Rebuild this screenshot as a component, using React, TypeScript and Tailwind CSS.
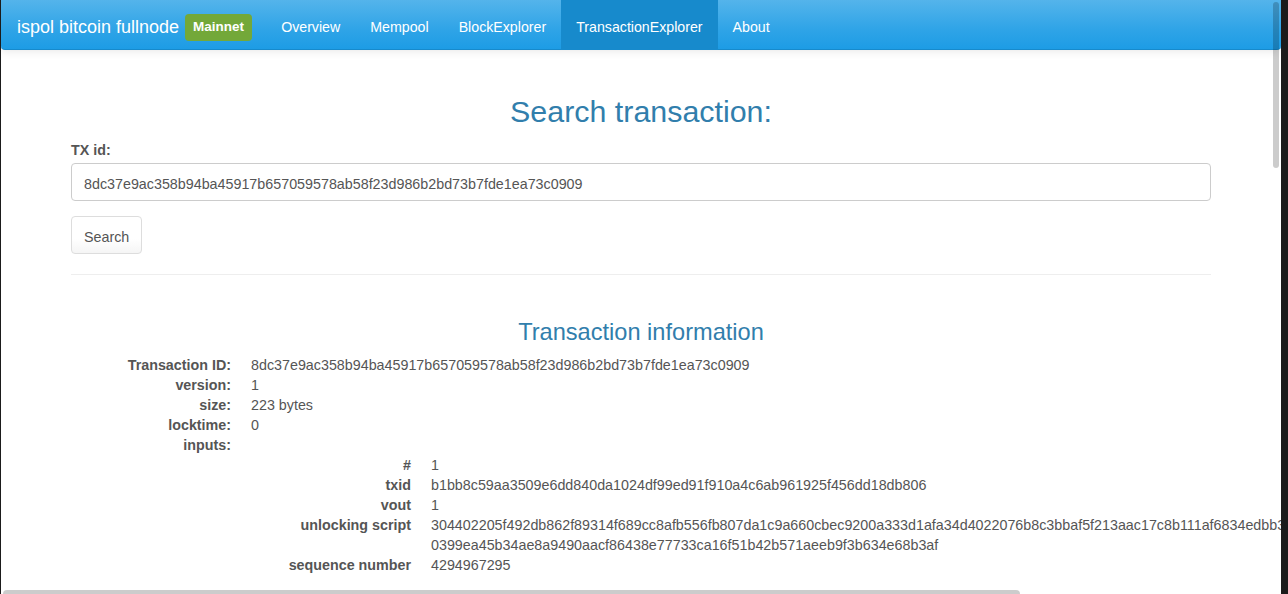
import React from "react";

const font = { fontFamily: '"Liberation Sans", Arial, sans-serif' };

function Row({ label, children, bold = true }: { label: string; children?: React.ReactNode; bold?: boolean }) {
  return (
    <div className="flex">
      <div className={`w-[160px] shrink-0 text-right whitespace-nowrap ${bold ? "font-bold" : ""}`}>{label}</div>
      <div className="ml-[20px] min-w-0 flex-1">{children}</div>
    </div>
  );
}

export default function App() {
  const navItems = ["Overview", "Mempool", "BlockExplorer", "TransactionExplorer", "About"];
  const sig =
    "304402205f492db862f89314f689cc8afb556fb807da1c9a660cbec9200a333d1afa34d4022076b8c3bbaf5f213aac17c8b111af6834edbb3c7e5a2d09f1e4b6a8c73d52e90101";
  const pub = "0399ea45b34ae8a9490aacf86438e77733ca16f51b42b571aeeb9f3b634e68b3af";
  return (
    <div className="w-[1288px] h-[594px] overflow-hidden flex bg-[#1b1b1b]" style={font}>
      <div className="w-[1px] shrink-0" />
      <div className="w-[1280px] shrink-0 h-full bg-white relative overflow-hidden text-[14.3px] leading-[20px] text-[#555555]">
        {/* navbar */}
        <div className="h-[50px] flex items-stretch rounded-b-[4px] border-b border-[#178acc] bg-[linear-gradient(#54b4eb,#2fa4e7_60%,#1d9ce5)] shadow-[0_1px_10px_rgba(0,0,0,0.1)] text-white">
          <div className="flex items-center pl-[16px] pt-[5px]">
            <span className="text-[18px] leading-[20px]">ispol bitcoin fullnode</span>
            <span className="ml-[6px] h-[27px] px-[8px] flex items-center rounded-[4px] bg-[#73a839] text-[13.5px] font-bold leading-none">
              Mainnet
            </span>
          </div>
          <div className="flex ml-[14px]">
            {navItems.map((n) => (
              <div
                key={n}
                className={`px-[15px] pt-[5px] flex items-center text-[14.2px] ${n === "TransactionExplorer" ? "bg-[#178acc]" : ""}`}
              >
                {n}
              </div>
            ))}
          </div>
        </div>

        {/* content */}
        <div className="ml-[70px] w-[1140px]">
          <h2 className="mt-[45px] text-center text-[30.4px] leading-[33px] text-[#317eac]">Search transaction:</h2>
          <div className="mt-[12px] font-bold">TX id:</div>
          <div className="mt-[3px] h-[38px] border border-[#cccccc] rounded-[4px] px-[12px] pt-[3px] flex items-center">
            8dc37e9ac358b94ba45917b657059578ab58f23d986b2bd73b7fde1ea73c0909
          </div>
          <div className="mt-[15px] inline-flex h-[38px] items-center px-[12px] pt-[3px] border border-[#dddddd] rounded-[4px] bg-[linear-gradient(#ffffff,#ffffff_60%,#f5f5f5)]">
            Search
          </div>
          <div className="mt-[20px] border-t border-[#eeeeee]" />
          <h3 className="mt-[44px] text-center text-[23.6px] leading-[26px] text-[#317eac]">Transaction information</h3>
          <div className="mt-[10px]">
            <Row label="Transaction ID:">8dc37e9ac358b94ba45917b657059578ab58f23d986b2bd73b7fde1ea73c0909</Row>
            <Row label="version:">1</Row>
            <Row label="size:">223 bytes</Row>
            <Row label="locktime:">0</Row>
            <Row label="inputs:">
              <div className="pt-[20px]">
                <Row label="#">1</Row>
                <Row label="txid">b1bb8c59aa3509e6dd840da1024df99ed91f910a4c6ab961925f456dd18db806</Row>
                <Row label="vout">1</Row>
                <Row label="unlocking script">
                  <div>{sig}</div>
                  <div>{pub}</div>
                </Row>
                <Row label="sequence number">4294967295</Row>
              </div>
            </Row>
          </div>
        </div>

        {/* overlay scrollbars */}
        <div className="absolute left-[1272px] top-[2px] w-[6px] h-[166px] rounded-full bg-[rgba(0,0,0,0.2)]" />
        <div className="absolute left-[2px] top-[590px] w-[1017px] h-[8px] rounded-full bg-[rgba(0,0,0,0.2)]" />
      </div>
      <div className="w-[7px] shrink-0" />
    </div>
  );
}
